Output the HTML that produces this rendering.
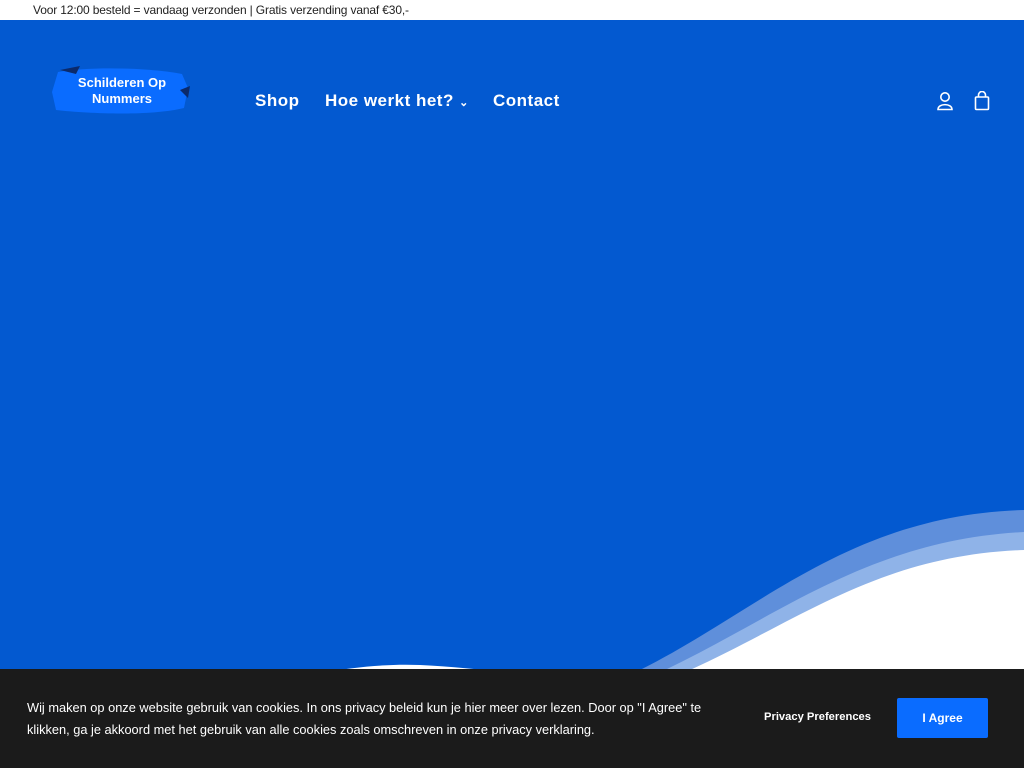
<!DOCTYPE html>
<html><head><meta charset="utf-8"><style>
*{margin:0;padding:0;box-sizing:border-box}
body{width:1024px;height:768px;overflow:hidden;font-family:"Liberation Sans",sans-serif;background:#fff;position:relative}
.top{height:20px;background:#fff;font-size:12px;color:#222;padding:3px 0 0 33px;line-height:14px;letter-spacing:-0.15px}
.hero{position:absolute;top:20px;left:0;width:1024px;height:748px;background:#0359d0;overflow:hidden}
.nav{position:absolute;top:91px;font-size:17px;color:#fff;font-weight:bold;letter-spacing:.5px}
.logo{position:absolute;left:52px;top:64px;width:140px;height:52px}
.logo span{position:absolute;left:0;width:140px;text-align:center;color:#fff;font-weight:bold;font-size:13px;line-height:16px}
.cookie{position:absolute;left:0;top:669px;width:1024px;height:99px;background:#1b1b1b;color:#fff}
.cookie p{position:absolute;left:27px;top:28px;font-size:12.8px;line-height:22px;width:690px}
.pp{position:absolute;left:764px;top:711px;font-size:11.2px;font-weight:bold;color:#fff}
.agree{position:absolute;left:897px;top:698px;width:91px;height:40px;background:#0a6cff;border-radius:2px;color:#fff;font-weight:bold;font-size:12px;text-align:center;line-height:40px}
</style></head><body>
<div class="top">Voor 12:00 besteld = vandaag verzonden | Gratis verzending vanaf €30,-</div>
<div class="hero">
<svg width="1024" height="748" style="position:absolute;left:0;top:0">
<path d="M640 650 C760 590 850 495 1024 490 L1024 748 L600 748 Z" fill="#5f8fdb"/>
<path d="M665 650 C780 595 870 520 1024 512 L1024 748 L620 748 Z" fill="#8fb3e8"/>
<path d="M690 650 C800 600 880 535 1024 530 L1024 748 L650 748 Z" fill="#fff"/>
<path d="M0 748 C150 700 300 640 420 645 C520 650 600 670 700 660 L700 748 Z" fill="#fff"/>
</svg>
</div>
<div class="logo">
<svg width="140" height="52" style="position:absolute;left:0;top:0"><path d="M6 8 C40 2 100 4 130 10 L136 24 L132 44 C100 52 40 50 4 46 L0 28 Z" fill="#0a6cff"/><path d="M8 6 L28 2 L24 10 Z M128 26 L138 22 L136 34 Z" fill="#0b2a6b"/></svg>
<span style="top:11px">Schilderen Op</span><span style="top:27px">Nummers</span>
</div>
<div class="nav" style="left:255px">Shop</div>
<div class="nav" style="left:325px">Hoe werkt het? <span style="font-size:11px">&#8964;</span></div>
<div class="nav" style="left:493px">Contact</div>
<svg style="position:absolute;left:936px;top:91px" width="18" height="20" fill="none" stroke="#fff" stroke-width="1.6"><circle cx="9" cy="6" r="4.2"/><path d="M2 18.5 C2 12 16 12 16 18.5 Z"/></svg>
<svg style="position:absolute;left:974px;top:91px" width="16" height="20" fill="none" stroke="#fff" stroke-width="1.6"><path d="M4.5 6 V4 a3.5 3.5 0 0 1 7 0 V6"/><rect x="1.5" y="6" width="13" height="12.5" rx="1"/></svg>
<div class="cookie"><p>Wij maken op onze website gebruik van cookies. In ons privacy beleid kun je hier meer over lezen. Door op "I Agree" te klikken, ga je akkoord met het gebruik van alle cookies zoals omschreven in onze privacy verklaring.</p></div>
<div class="pp">Privacy Preferences</div>
<div class="agree">I Agree</div>
</body></html>
